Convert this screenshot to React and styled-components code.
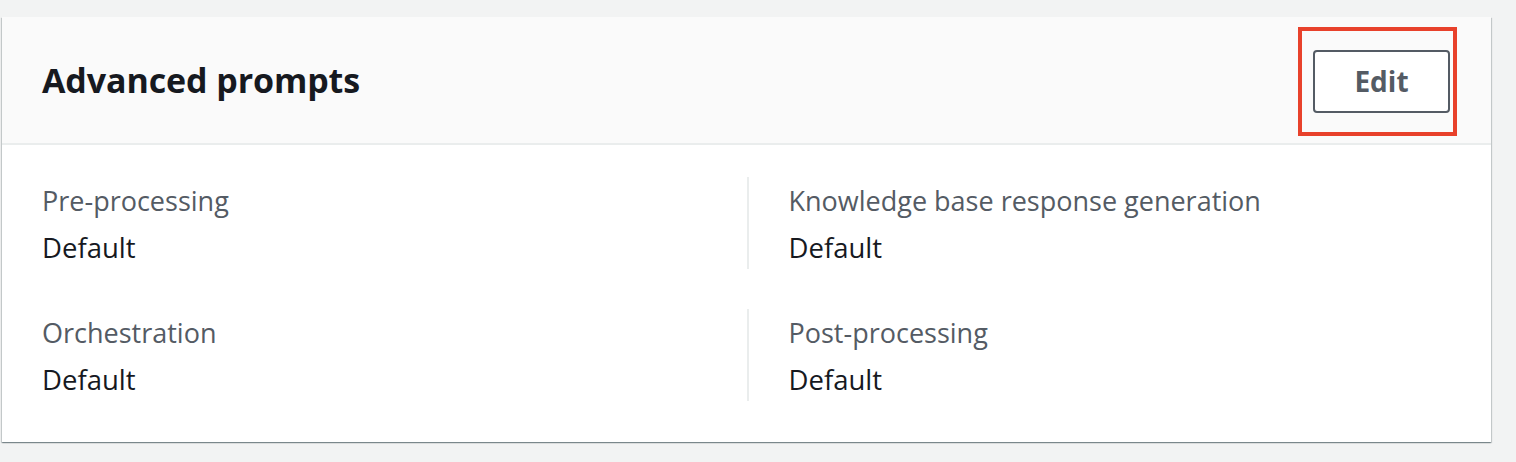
import React from 'react';
import styled, { createGlobalStyle } from 'styled-components';

const GlobalStyle = createGlobalStyle`
  html, body {
    margin: 0;
    padding: 0;
    background: #f2f3f3;
    font-family: "Open Sans", "Noto Sans", sans-serif;
  }
`;

const Page = styled.div`
  padding: 17px 25px 19px 2px;
  height: 462px;
  box-sizing: border-box;
`;

const Card = styled.section`
  background: #ffffff;
  box-shadow: 0 1px 1px 0 rgba(0, 28, 36, 0.3), 1px 1px 1px 0 rgba(0, 28, 36, 0.15), -1px 1px 1px 0 rgba(0, 28, 36, 0.15);
  height: 425px;
  box-sizing: border-box;
`;

const Header = styled.header`
  height: 128px;
  background: #fafafa;
  border-bottom: 2px solid #eaeded;
  display: flex;
  align-items: center;
  justify-content: space-between;
  padding: 0 34px 0 40px;
  box-sizing: border-box;
`;

const Title = styled.h2`
  margin: 0;
  font-size: 34px;
  font-weight: 700;
  color: #16191f;
  letter-spacing: -0.1px;
`;

const Highlight = styled.div`
  border: 4px solid #e8412b;
  padding: 19px 3px 19px 11px;
  margin-top: 2px;
`;

const Button = styled.button`
  width: 137px;
  height: 63px;
  border: 2px solid #545b64;
  border-radius: 4px;
  background: #ffffff;
  color: #545b64;
  font-family: inherit;
  font-size: 28px;
  font-weight: 700;
  cursor: pointer;
`;

const Body = styled.div`
  display: grid;
  grid-template-columns: 1fr 1fr;
  row-gap: 40px;
  padding: 32px 40px 0 40px;
`;

const Field = styled.div`
  padding-left: ${props => (props.$divided ? '40px' : '0')};
  border-left: ${props => (props.$divided ? '2px solid #eaeded' : 'none')};
  height: 92px;
  box-sizing: border-box;
  padding-top: 2px;
`;

const Label = styled.div`
  font-size: 27px;
  color: #545b64;
  line-height: 44px;
`;

const Value = styled.div`
  font-size: 27.5px;
  color: #16191f;
  line-height: 50px;
`;

const fields = [
  ['Pre-processing', 'Default'],
  ['Knowledge base response generation', 'Default'],
  ['Orchestration', 'Default'],
  ['Post-processing', 'Default'],
];

export default function App() {
  return (
    <>
      <GlobalStyle />
      <Page>
        <Card>
          <Header>
            <Title>Advanced prompts</Title>
            <Highlight>
              <Button>Edit</Button>
            </Highlight>
          </Header>
          <Body>
            {fields.map(([label, value], i) => (
              <Field key={label} $divided={i % 2 === 1}>
                <Label>{label}</Label>
                <Value>{value}</Value>
              </Field>
            ))}
          </Body>
        </Card>
      </Page>
    </>
  );
}
